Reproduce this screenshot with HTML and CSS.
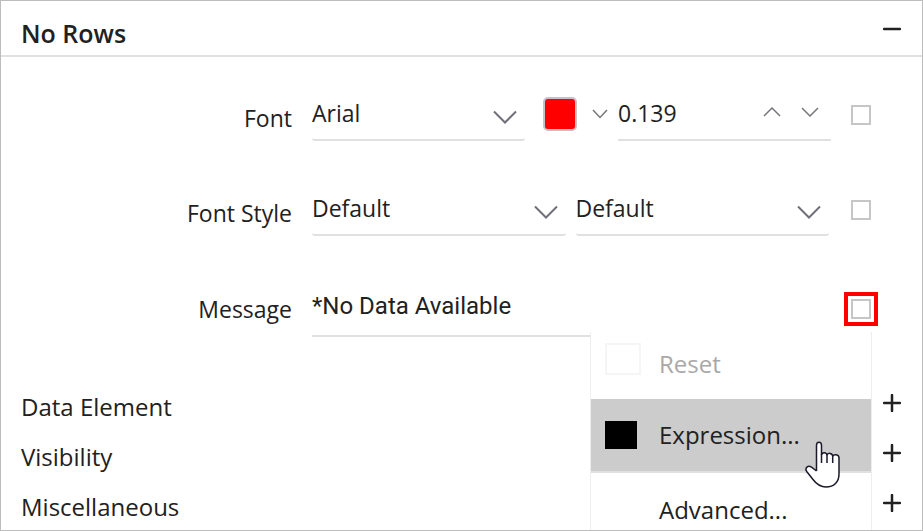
FILE: index.html
```html
<!DOCTYPE html>
<html lang="en">
<head>
<meta charset="utf-8">
<title>No Rows</title>
<link rel="stylesheet" href="styles.css">
</head>
<body>
<main class="panel">
  <header class="panel-header">
    <h1 class="panel-title">No Rows</h1>
    <button class="toggle" type="button" aria-label="Collapse No Rows">
      <svg class="toggle-icon" viewBox="0 0 18 18"><path d="M1 9H17"/></svg>
    </button>
  </header>

  <form class="properties">
    <div class="row">
      <label class="row-label" for="font">Font</label>
      <div class="row-fields row-fields-font">
        <div class="field">
          <select class="field-input" id="font"><option>Arial</option></select>
          <svg class="chevron" viewBox="0 0 24 14"><path d="M1 1.5L12 12.5L23 1.5"/></svg>
        </div>
        <div class="color">
          <button class="swatch" type="button" aria-label="Font color"></button>
          <button class="step" type="button" aria-label="Choose color">
            <svg class="step-icon" viewBox="0 0 18 10"><path d="M2 1L9 8.5L16 1"/></svg>
          </button>
        </div>
        <div class="field field-number">
          <input class="field-input" type="text" value="0.139" aria-label="Font size">
          <button class="step" type="button" aria-label="Increase">
            <svg class="step-icon" viewBox="0 0 18 10"><path d="M1 9L9 1L17 9"/></svg>
          </button>
          <button class="step" type="button" aria-label="Decrease">
            <svg class="step-icon" viewBox="0 0 18 10"><path d="M1 1L9 9L17 1"/></svg>
          </button>
        </div>
      </div>
      <button class="marker" type="button" aria-label="Font options"></button>
    </div>

    <div class="row">
      <label class="row-label" for="style">Font Style</label>
      <div class="row-fields row-fields-style">
        <div class="field">
          <select class="field-input" id="style"><option>Default</option></select>
          <svg class="chevron" viewBox="0 0 24 14"><path d="M1 1.5L12 12.5L23 1.5"/></svg>
        </div>
        <div class="field">
          <select class="field-input" aria-label="Font weight"><option>Default</option></select>
          <svg class="chevron" viewBox="0 0 24 14"><path d="M1 1.5L12 12.5L23 1.5"/></svg>
        </div>
      </div>
      <button class="marker" type="button" aria-label="Font style options"></button>
    </div>

    <div class="row row-message">
      <label class="row-label" for="message">Message</label>
      <div class="row-fields">
        <div class="field field-message">
          <input class="field-input" id="message" type="text" value="*No Data Available">
        </div>
      </div>
      <button class="marker marker-active" type="button" aria-label="Message options"></button>
      <div class="menu" role="menu">
        <button class="menu-item" type="button" role="menuitem" disabled><span class="menu-box"></span>Reset</button>
        <button class="menu-item menu-item-hover" type="button" role="menuitem"><span class="menu-box menu-box-filled"></span>Expression...</button>
        <button class="menu-item" type="button" role="menuitem"><span class="menu-box menu-box-none"></span>Advanced...</button>
        <svg class="pointer" viewBox="0 0 36 48"><path d="M11.5 30V4.5C11.5 0.3 16.5 0.3 16.5 4.5V14C17 10.8 21.7 11 22 14.3C22.7 11.5 27.5 11.7 27.7 15.3C28.5 12.8 34 13 34 17V33C34 41 29 46 21 46C14.5 46 11 42.5 8 38.5L1.7 30.5C-0.5 27 3 23.7 6.5 26.2L11.5 30"/><path d="M16.5 13V22M22 14V22M27.7 15V22"/></svg>
      </div>
    </div>
  </form>

  <section class="section">
    <h2 class="section-title">Data Element</h2>
    <button class="toggle" type="button" aria-label="Expand Data Element">
      <svg class="toggle-icon" viewBox="0 0 18 18"><path d="M1 9H17M9 1V17"/></svg>
    </button>
  </section>
  <section class="section">
    <h2 class="section-title">Visibility</h2>
    <button class="toggle" type="button" aria-label="Expand Visibility">
      <svg class="toggle-icon" viewBox="0 0 18 18"><path d="M1 9H17M9 1V17"/></svg>
    </button>
  </section>
  <section class="section">
    <h2 class="section-title">Miscellaneous</h2>
    <button class="toggle" type="button" aria-label="Expand Miscellaneous">
      <svg class="toggle-icon" viewBox="0 0 18 18"><path d="M1 9H17M9 1V17"/></svg>
    </button>
  </section>
</main>
</body>
</html>
```
FILE: styles.css
```css
* {
  box-sizing: border-box;
}

body {
  margin: 0;
  background: #fff;
  color: #212121;
  font-family: "Open Sans", "Noto Sans", sans-serif;
  font-size: 23px;
  line-height: 32px;
}

button,
input,
select {
  margin: 0;
  padding: 0;
  border: 0;
  border-radius: 0;
  background: transparent;
  color: inherit;
  font: inherit;
}

svg {
  display: block;
  fill: none;
  stroke: currentColor;
}

.panel {
  position: relative;
  min-height: 100vh;
  border: 1px solid #bdbdbd;
  overflow: hidden;
}

.panel-header,
.section {
  display: flex;
  justify-content: space-between;
  align-items: flex-start;
  padding: 0 20px;
}

.panel-header {
  height: 56px;
  padding-top: 16px;
  border-bottom: 2px solid #e0e0e0;
}

.panel-title,
.section-title {
  margin: 0;
  font-size: 24px;
  font-weight: 400;
}

.panel-title {
  font-size: 25px;
  font-weight: 600;
}

.section {
  height: 50px;
  padding-top: 11px;
}

.toggle {
  display: grid;
  place-items: center;
  width: 20px;
  height: 24px;
}

.toggle-icon {
  width: 18px;
  height: 18px;
  stroke-width: 2.5;
  stroke-linecap: round;
}

.properties {
  display: flex;
  flex-direction: column;
  gap: 41px;
  padding: 30px 51px 43px 0;
}

.row {
  display: grid;
  grid-template-columns: 291px 1fr 20px;
  column-gap: 20px;
  align-items: center;
}

.row-message {
  position: relative;
}

.row-label {
  padding-top: 8px;
  text-align: right;
}

.row-message .row-label {
  padding-top: 4px;
}

.row-fields {
  display: grid;
}

.row-fields-font {
  grid-template-columns: 1fr auto 1fr;
}

.row-fields-style {
  grid-template-columns: 1fr 1fr;
  column-gap: 10px;
  padding-right: 2px;
}

.field {
  display: flex;
  align-items: center;
  min-width: 0;
  height: 54px;
  border-bottom: 2px solid #e0e0e0;
  border-radius: 3px;
}

.field-input {
  flex: 1;
  min-width: 0;
  height: 48px;
  appearance: none;
  outline: 0;
}

.field-number {
  gap: 18px;
  padding-right: 11px;
  border-radius: 0;
}

.field-number .step-icon {
  margin-bottom: 2px;
}

.field-message {
  height: 60px;
  border-radius: 0;
  font-family: Roboto, sans-serif;
  font-size: 24px;
}

.chevron {
  width: 24px;
  height: 14px;
  margin: 8px 8px 0 0;
  color: #707078;
  stroke-width: 2;
}

.color {
  display: flex;
  align-items: center;
  gap: 13px;
  padding: 0 8px 0 18px;
}

.swatch {
  width: 34px;
  height: 34px;
  border: 2px solid #c4c4c8;
  border-radius: 5px;
  background: #f00;
}

.step {
  display: grid;
  place-items: center;
  width: 20px;
  height: 20px;
  color: #77777b;
}

.step-icon {
  width: 18px;
  height: 10px;
  stroke-width: 1.5;
}

.marker {
  width: 20px;
  height: 20px;
  margin-top: 2px;
  border: 2px solid #c6c6c6;
}

.marker-active {
  margin-top: 4px;
  outline: 4px solid #f00;
  outline-offset: 3px;
}

.menu {
  position: absolute;
  top: 55px;
  right: -1px;
  width: 282px;
  border: 1px solid #eee;
  border-top: 0;
  background: #fff;
}

.menu-item {
  display: flex;
  align-items: center;
  gap: 18px;
  width: 100%;
  height: 74px;
  padding-left: 14px;
  font-size: 24px;
}

.menu-item:first-child {
  height: 67px;
  padding-bottom: 4px;
}

.menu-item:disabled {
  color: #a8a8a8;
}

.menu-item-hover {
  border-bottom: 2px solid #e0e0e0;
  background: #ccc;
}

.menu-box {
  width: 36px;
  height: 32px;
  margin-bottom: 10px;
  border: 2px solid #f5f5f5;
}

.menu-box-filled {
  width: 32px;
  height: 28px;
  margin: 0 4px 0 0;
  border: 0;
  background: #000;
}

.menu-box-none {
  border: 0;
}

.pointer {
  position: absolute;
  top: 109px;
  right: 30px;
  width: 36px;
  height: 48px;
  fill: #fff;
  stroke: #1b1b2b;
  stroke-width: 1.5;
}
```
